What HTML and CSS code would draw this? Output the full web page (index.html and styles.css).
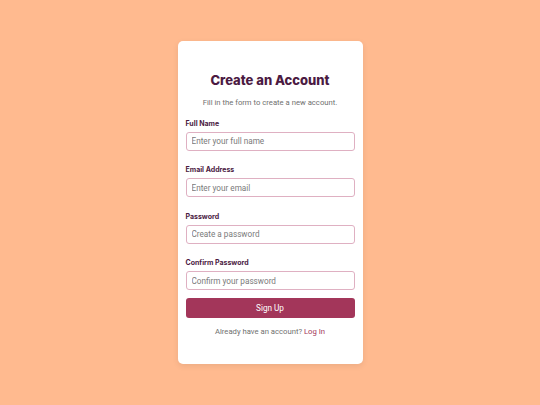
FILE: index.html
```html
<!DOCTYPE html>
<html lang="en">
<head>
<meta charset="utf-8">
<title>Create an Account</title>
<link rel="stylesheet" href="styles.css">
</head>
<body>
<main class="card">
  <h1 class="title">Create an Account</h1>
  <p class="subtitle">Fill in the form to create a new account.</p>
  <form class="form">
    <div class="group">
      <label class="label" for="name">Full Name</label>
      <input class="input" id="name" type="text" placeholder="Enter your full name">
    </div>
    <div class="group">
      <label class="label" for="email">Email Address</label>
      <input class="input" id="email" type="email" placeholder="Enter your email">
    </div>
    <div class="group">
      <label class="label" for="pw">Password</label>
      <input class="input" id="pw" type="password" placeholder="Create a password">
    </div>
    <div class="group">
      <label class="label" for="pw2">Confirm Password</label>
      <input class="input" id="pw2" type="password" placeholder="Confirm your password">
    </div>
    <button class="btn" type="button">Sign Up</button>
  </form>
  <p class="footer">Already have an account? <a class="link" href="#">Log In</a></p>
</main>
</body>
</html>
```
FILE: styles.css
```css
* { box-sizing: border-box; }
html, body { height: 100%; }
body {
  margin: 0;
  background: #ffba8f;
  display: flex;
  align-items: center;
  justify-content: center;
  font-family: Roboto, "Noto Sans", sans-serif;
}
.card {
  width: 185px;
  background: #ffffff;
  border-radius: 5px;
  box-shadow: 0 2px 6px rgba(0,0,0,0.08);
  padding: 30px 8px 27.5px;
}
.title {
  margin: 0;
  text-align: center;
  font-family: Inter, Roboto, sans-serif;
  font-size: 13px;
  line-height: 18px;
  font-weight: 800;
  color: #4b1a42;
}
.subtitle {
  margin: 8px 0 0;
  text-align: center;
  font-size: 7.7px;
  line-height: 12px;
  color: #707070;
}
.form {
  margin-top: 10px;
  display: flex;
  flex-direction: column;
}
.group {
  display: flex;
  flex-direction: column;
  margin-bottom: 14.5px;
}
.group:last-of-type { margin-bottom: 0; }
.label {
  font-family: Inter, Roboto, sans-serif;
  font-size: 7px;
  line-height: 10px;
  font-weight: 700;
  color: #4b1a42;
  margin-bottom: 3px;
}
.input {
  height: 19px;
  width: 100%;
  border: 1px solid #dfb0c2;
  border-radius: 3px;
  padding: 0 5px;
  font-family: "Liberation Sans Narrow", Roboto, sans-serif;
  font-size: 8.2px;
  color: #333;
  outline: none;
}
.input::placeholder { color: #7a7a7a; }
.btn {
  margin-top: 8px;
  height: 20px;
  width: 100%;
  border: none;
  border-radius: 3px;
  background: #a3365a;
  color: #ffffff;
  font-family: "Liberation Sans Narrow", Roboto, sans-serif;
  font-size: 8.2px;
  font-weight: 400;
}
.footer {
  margin: 7.5px 0 0;
  text-align: center;
  font-size: 7.7px;
  line-height: 11px;
  color: #707070;
}
.link {
  color: #a3365a;
  text-decoration: none;
}
```
